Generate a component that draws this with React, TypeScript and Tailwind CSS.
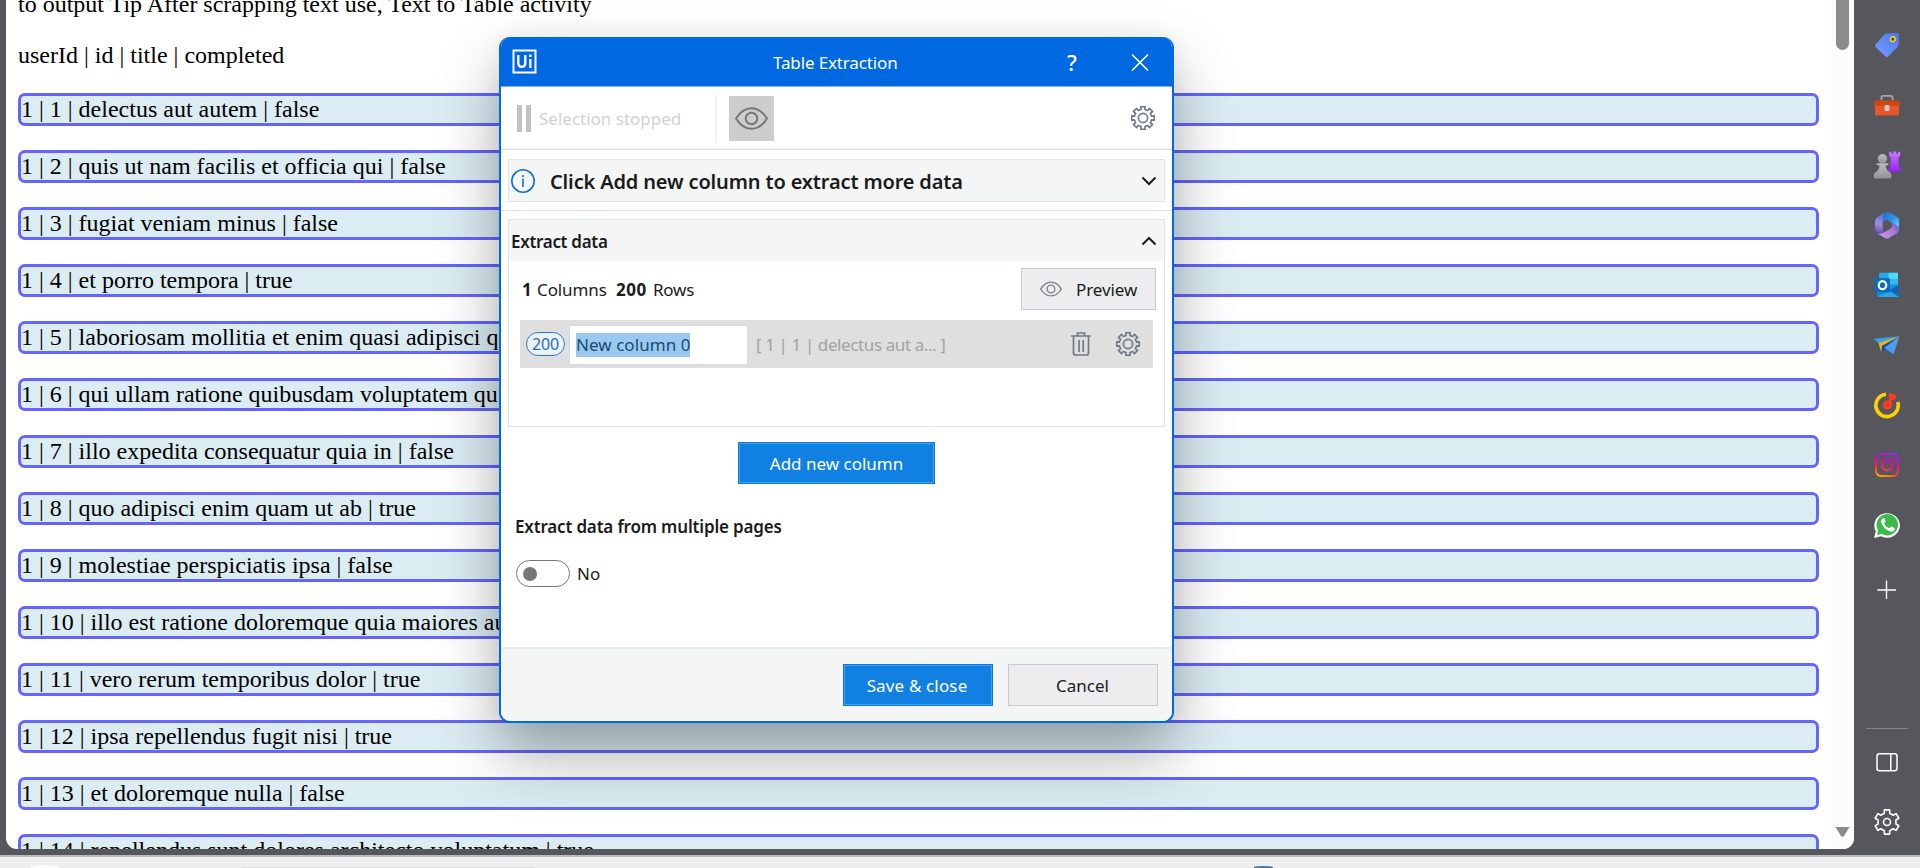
import type { ReactNode } from "react";

const rows = [
  "1 | 1 | delectus aut autem | false",
  "1 | 2 | quis ut nam facilis et officia qui | false",
  "1 | 3 | fugiat veniam minus | false",
  "1 | 4 | et porro tempora | true",
  "1 | 5 | laboriosam mollitia et enim quasi adipisci q",
  "1 | 6 | qui ullam ratione quibusdam voluptatem qu",
  "1 | 7 | illo expedita consequatur quia in | false",
  "1 | 8 | quo adipisci enim quam ut ab | true",
  "1 | 9 | molestiae perspiciatis ipsa | false",
  "1 | 10 | illo est ratione doloremque quia maiores au",
  "1 | 11 | vero rerum temporibus dolor | true",
  "1 | 12 | ipsa repellendus fugit nisi | true",
  "1 | 13 | et doloremque nulla | false",
  "1 | 14 | repellendus sunt dolores architecto voluptatum | true",
];

/* Closed outline of a cog; `w` and `t` are the half angles (degrees) of a tooth's foot and tip. */
function cogPath(teeth: number, c: number, outer: number, inner: number, w: number, t: number) {
  const pts: string[] = [];
  const at = (r: number, deg: number) => {
    const a = ((deg - 90) * Math.PI) / 180;
    pts.push(`${(c + r * Math.cos(a)).toFixed(2)} ${(c + r * Math.sin(a)).toFixed(2)}`);
  };
  for (let i = 0; i < teeth; i++) {
    const m = (360 / teeth) * i;
    at(inner, m - w);
    at(outer, m - t);
    at(outer, m + t);
    at(inner, m + w);
  }
  return `M${pts.join("L")}Z`;
}

const dialogCog = cogPath(8, 12, 11.5, 8.8, 13, 10.5);
const sidebarCog = cogPath(6, 14, 12.4, 9.2, 17, 12.5);

function Cog() {
  return (
    <svg className="size-6 shrink-0" viewBox="0 0 24 24" fill="none" stroke="#6f7c87" strokeWidth="1.7">
      <path d={dialogCog} />
      <circle cx="12" cy="12" r="4.6" />
    </svg>
  );
}

function Eye({ className, stroke, width }: { className: string; stroke: string; width: number }) {
  return (
    <svg className={className} viewBox="0 0 32 22" fill="none" stroke={stroke} strokeWidth={width}>
      <path d="M1 11C5 4.500 10 1 16 1s11 3.500 15 10c-4 6.500-9 10-15 10S5 17.500 1 11Z" />
      <circle cx="16" cy="11" r="5.600" />
    </svg>
  );
}

function Chevron({ up = false }: { up?: boolean }) {
  return (
    <svg className="h-[10px] w-4" viewBox="0 0 16 10" fill="none" stroke="#1b1b1b" strokeWidth="2">
      <path d={up ? "M1.500 8.500 8 2l6.500 6.500" : "M1.500 1.500 8 8l6.500-6.500"} />
    </svg>
  );
}

function Slot({ children }: { children: ReactNode }) {
  return <div className="flex h-[60px] w-full items-center justify-center">{children}</div>;
}

function Sidebar() {
  return (
    <aside className="flex w-[66px] shrink-0 flex-col items-center pt-[15px]">
      <Slot>
        <svg className="size-[26px]" viewBox="0 0 26 26">
          <defs>
            <linearGradient id="tag" x1="1" y1="0" x2="0" y2="1">
              <stop offset="0" stopColor="#4a78ee" />
              <stop offset="1" stopColor="#7b9cff" />
            </linearGradient>
          </defs>
          <path d="M12.500 1.500 23.500 1q1.500 0 1.500 1.500L24.500 13q0 1-1 2L14 24.500q-1.200 1-2.400 0L1.500 15q-1-1.200 0-2.400L10.500 2.500q.8-.9 2-1Z" fill="url(#tag)" />
          <circle cx="18.800" cy="7.200" r="2.300" fill="#3b4252" stroke="#f2cf1f" strokeWidth="1.700" />
        </svg>
      </Slot>
      <Slot>
        <svg className="size-[28px]" viewBox="0 0 28 28">
          <path d="M8.500 9V6.500Q8.500 4.800 10 4.800h8q1.500 0 1.500 1.700V9" fill="none" stroke="#a9a9a9" strokeWidth="1.800" />
          <path d="M2 13h24v10q0 1.500-1.500 1.500h-21Q2 24.500 2 23Z" fill="#e9562c" />
          <path d="M2 9.500h24q.8 0 .8.800l.5 4q0 .8-.8.800H1.500q-.8 0-.8-.800l.5-4Q1.200 9.500 2 9.500Z" fill="#d04512" />
          <rect x="11.600" y="14" width="4.800" height="6" rx="1.200" fill="#c9c9c9" />
        </svg>
      </Slot>
      <Slot>
        <svg className="size-[28px]" viewBox="0 0 28 28">
          <defs>
            <linearGradient id="rook" x1="0" y1="0" x2="0" y2="1">
              <stop offset="0" stopColor="#c77bff" />
              <stop offset="1" stopColor="#9a1dff" />
            </linearGradient>
            <linearGradient id="pawn" x1="0" y1="0" x2="0" y2="1">
              <stop offset="0" stopColor="#bdbdbd" />
              <stop offset="1" stopColor="#939393" />
            </linearGradient>
          </defs>
          <path d="M16 .8h2.200v1.800h2.100V.5h2.600v2.100H25V.8h2.200V5l-1.800 1.500.5 8.500 1.400 3v2.500H15.900V18l1.400-3 .5-8.500L16 5Z" fill="url(#rook)" />
          <circle cx="9.500" cy="7.800" r="4.700" fill="url(#pawn)" />
          <path d="M4.500 12.300h10q1 0 1 .9t-1 1h-1.800q.3 5.200 3.800 6.800 2 1.200 2 4 0 2.500-1.500 2.500H2.200Q.7 27.500.7 25q0-2.800 2-4 3.500-1.600 3.800-6.800h-2q-1-.1-1-1t1-.9Z" fill="url(#pawn)" />
        </svg>
      </Slot>
      <Slot>
        <svg className="size-[28px]" viewBox="0 0 28 28">
          <defs>
            <linearGradient id="m1" x1="0" y1="0" x2="1" y2="1">
              <stop offset="0" stopColor="#2b62c4" />
              <stop offset=".5" stopColor="#2f8ede" />
              <stop offset="1" stopColor="#5fe0ff" />
            </linearGradient>
            <linearGradient id="m2" x1=".3" y1="0" x2=".2" y2="1">
              <stop offset="0" stopColor="#5a6fd0" />
              <stop offset=".5" stopColor="#a58be0" />
              <stop offset="1" stopColor="#5348b8" />
            </linearGradient>
            <linearGradient id="m3" x1="0" y1=".6" x2="1" y2="0">
              <stop offset="0" stopColor="#cf95ea" />
              <stop offset=".6" stopColor="#a576d4" />
              <stop offset="1" stopColor="#6a4bc0" />
            </linearGradient>
          </defs>
          <path d="M11.500 1.800 4 6.200Q2 7.500 2 9.500V18q0 2.500 2 3.700l3 1.500q2 .5 2.800-1.200V11q0-4 1.700-9.200Z" fill="url(#m2)" />
          <path d="M13.500 1q1.500-.6 3 .2l7 4.300q2.500 1.300 2.500 3.500v8l-7.500-5.500-3.500-2q-2.500-1.200-4.200 1.200L9.800 11.800V6.500Q10 2.600 13.500 1Z" fill="url(#m1)" />
          <path d="M26 14v5q0 2-2 3.300l-8 4.700q-2 1-4 0L4.500 22.500q3.500.9 6.300-1l6.900-4q1.300-.8 1.300-2.300V11.500L26 16Z" fill="url(#m3)" />
          <path d="m14 9.800 4.600 2.500v3.500L14 18.400l-4.200-2.300v-4Z" fill="#56575c" />
        </svg>
      </Slot>
      <Slot>
        <svg className="size-[26px]" viewBox="0 0 26 26">
          <path d="M5 1.500Q5 .8 5.800.8h17.400q.8 0 .8.700V13H5Z" fill="#28a8ea" />
          <path d="M14.500.8H24V7h-9.500Z" fill="#50d9ff" />
          <path d="M14 7h10v6H14Z" fill="#35b8f1" />
          <path d="M3 12.500h22V24q0 1-1 1H4q-1 0-1-1Z" fill="#1490df" />
          <path d="m25 12.500-10 6L25 25Z" fill="#1066b5" />
          <path d="m4 25 11-6.500L25 25Z" fill="#28a8ea" />
          <rect x="1" y="6" width="15" height="14.500" rx="1.200" fill="#0a6cc8" />
          <ellipse cx="8.500" cy="13.200" rx="3.700" ry="4" fill="none" stroke="#fff" strokeWidth="2.300" />
        </svg>
      </Slot>
      <Slot>
        <svg className="size-[28px]" viewBox="0 0 28 28">
          <path d="M.8 7.700 26.500 5.200 7 13.500Z" fill="#35a2e8" />
          <path d="M26.500 5.200 5.500 12l2.700 9.500L11 16.500Z" fill="#f4b10a" />
          <path d="M26.500 5.200 9 14.800l-.8 6.700 4-3.500Z" fill="#1b4fa6" />
          <path d="M26.500 5.200 11.500 16.700 20.500 23.500Z" fill="#4a9df0" />
        </svg>
      </Slot>
      <Slot>
        <svg className="size-[28px]" viewBox="0 0 28 28">
          <path d="M13 3.200A11.200 11.200 0 1 0 24.700 11" fill="none" stroke="#fdd000" strokeWidth="3.600" />
          <circle cx="14.300" cy="14" r="4.500" fill="#ff3b1f" />
          <path d="M16 14V1.500l7.700 3.200-2.300 4.800-2.600-1.300V14Z" fill="#ff3b1f" />
        </svg>
      </Slot>
      <Slot>
        <svg className="size-[26px]" viewBox="0 0 26 26" fill="none" stroke="url(#ig)">
          <defs>
            <linearGradient id="ig" gradientUnits="userSpaceOnUse" x1="6" y1="26" x2="13" y2="0">
              <stop offset="0" stopColor="#ffc20a" />
              <stop offset=".25" stopColor="#ff4a1c" />
              <stop offset=".5" stopColor="#ff0a86" />
              <stop offset=".75" stopColor="#d800c8" />
              <stop offset="1" stopColor="#8a2cff" />
            </linearGradient>
          </defs>
          <rect x="2" y="2" width="22" height="22" rx="5" strokeWidth="2.100" />
          <circle cx="13" cy="13" r="5.200" strokeWidth="2.100" />
          <circle cx="19.300" cy="6.700" r=".7" strokeWidth="1.400" />
        </svg>
      </Slot>
      <Slot>
        <svg className="size-[28px]" viewBox="0 0 28 28">
          <path d="M1 27 2.800 20.300A12.800 12.300 0 1 1 8 25.300Z" fill="#fff" />
          <circle cx="14.300" cy="13.700" r="10.700" fill="#3cba4b" />
          <path d="M4 24.200 5.300 18l4 4.500Z" fill="#3cba4b" />
          <path d="M9.800 7.300c-1.800 1-2 3.200-1.200 5.200 1.700 4 5.400 7.400 9.400 8 2 .2 3.600-.8 3.800-2.800.1-.7-2.900-2.400-3.700-2.300-.8.200-1.300 1.800-1.900 1.700-2.100-.6-4.200-2.600-5-4.700-.1-.6 1.300-1.200 1.300-2 0-.8-1-3-1.500-3.200-.4-.1-.9-.1-1.200.1Z" fill="#fff" />
        </svg>
      </Slot>
      <div className="flex h-[70px] items-center">
        <svg className="size-5" viewBox="0 0 20 20" stroke="#fff" strokeWidth="1.400">
          <path d="M9.500.5v18.500M.3 10H19" />
        </svg>
      </div>
      <div className="mt-[102.500px] h-px w-[42px] bg-[#85868a]" />
      <div className="flex h-[66px] items-center">
        <svg className="size-6" viewBox="0 0 24 24" fill="none" stroke="#fff" strokeWidth="1.500">
          <rect x="2" y="3.700" width="20" height="17" rx="2.500" />
          <path d="M15.800 3.700v17" />
        </svg>
      </div>
      <div className="flex h-[54px] items-center">
        <svg className="size-7" viewBox="0 0 28 28" fill="none" stroke="#fff" strokeWidth="1.600" strokeLinejoin="round">
          <path d={sidebarCog} />
          <circle cx="14" cy="14" r="3.500" />
        </svg>
      </div>
    </aside>
  );
}

function Page() {
  return (
    <main className="flex h-[849px] w-[1848px] shrink-0 overflow-hidden rounded-br-[11px] rounded-bl-[11px] bg-white">
      <div className="-mt-[9px] flex h-[900px] w-[1825px] shrink-0 flex-col gap-6 pr-3 pl-3 font-['Liberation_Serif',serif] text-[24px] leading-[27px] whitespace-nowrap text-black">
        <p>to output Tip After scrapping text use, Text to Table activity</p>
        <p>userId | id | title | completed</p>
        {rows.map((row) => (
          <p key={row} className="shrink-0 rounded-[7px] border-[3px] border-[#6464ff] bg-[#dbecf3]">
            {row}
          </p>
        ))}
      </div>
      <div className="flex w-[23px] flex-col items-center justify-between bg-[#fcfcfc]">
        <div className="h-[50px] w-[13px] rounded-b-full bg-[#8b8b8b]" />
        <svg className="mb-3 h-[10px] w-[15px]" viewBox="0 0 15 10">
          <path d="M.5 0h14L9 9q-1.500 1.500-3 0Z" fill="#8b8b8b" />
        </svg>
      </div>
    </main>
  );
}

function Dialog() {
  return (
    <section className="absolute top-[37px] left-[499px] flex h-[686px] w-[675px] flex-col overflow-hidden rounded-[11px] border-2 border-t-0 border-[#0068e0] bg-white font-['Noto_Sans',sans-serif] text-[17px] leading-6 whitespace-nowrap text-[#1b1b1b] shadow-[0_32px_64px_rgba(0,0,0,0.32),0_0_24px_rgba(0,0,0,0.06)]">
      <header className="flex h-[50px] shrink-0 items-center border-b border-[#7db3f2] bg-[#0068e0] text-white">
        <svg className="ml-[11px] size-[25px]" viewBox="0 0 25 25" fill="none" stroke="#fff">
          <rect x="1.500" y="1.500" width="22" height="22" strokeWidth="2" />
          <path d="M6.300 6v8.200q0 3.600 3.500 3.600t3.500-3.600V6M18.300 10v9" strokeWidth="2.300" />
          <path d="M18.300 5.500v2.600" strokeWidth="2.500" />
        </svg>
        <h1 className="ml-[236px] w-[130px] pt-[2px] tracking-[-0.14px]">Table Extraction</h1>
        <span className="ml-[164px] text-[22px] font-medium">?</span>
        <svg className="ml-[54px] size-[18px]" viewBox="0 0 18 18" stroke="#fff" strokeWidth="1.600">
          <path d="m1 1.500 16 16M17 1.500 1 17.500" />
        </svg>
      </header>

      <div className="flex h-[63px] shrink-0 items-center border-b border-[#dedede] shadow-[0_-1px_0_#f2f2f2_inset]">
        <div className="ml-[16px] flex gap-[4px]">
          <span className="h-[27px] w-[5px] bg-[#c3c3c3]" />
          <span className="h-[27px] w-[5px] bg-[#c3c3c3]" />
        </div>
        <span className="ml-2 w-[176px] pt-px text-[#d2d2d2]">Selection stopped</span>
        <span className="h-12 w-0.5 bg-[#f3f3f3]" />
        <span className="ml-3 flex size-[45px] items-center justify-center bg-[#cdcdcd]">
          <Eye className="h-[23px] w-[33px]" stroke="#77777b" width={2} />
        </span>
        <span className="ml-auto mr-[17px]">
          <Cog />
        </span>
      </div>

      <div className="h-[61px] shrink-0 border-b border-[#dedede] px-[7px] pt-[9px]">
        <div className="flex h-[43px] items-center border border-[#e2e3e3] bg-[#f4f6f6] pr-[7px] pl-[2px]">
          <svg className="size-6" viewBox="0 0 24 24" fill="none" stroke="#0f6fde" strokeWidth="1.600">
            <circle cx="12" cy="12" r="11.200" />
            <path d="M12 9.500V18M12 6v2" />
          </svg>
          <h2 className="ml-[15px] flex-1 pt-[2px] text-[20px] font-semibold tracking-[-0.15px]">
            Click Add new column to extract more data
          </h2>
          <Chevron />
        </div>
      </div>

      <div className="mx-[7px] mt-2 flex h-[208px] shrink-0 flex-col border border-[#e2e3e3]">
        <div className="flex h-[41px] items-center justify-between bg-[#f4f6f6] pr-[7px] pl-[2px]">
          <h3 className="pt-[2px] font-semibold tracking-[-0.3px]">Extract data</h3>
          <Chevron up />
        </div>
        <div className="mt-[7px] flex items-center pr-2 pl-[13px]">
          <b className="w-[15px] pt-[2px]">1</b>
          <span className="w-[79px] pt-[2px] tracking-[-0.1px]">Columns</span>
          <b className="w-[37px] pt-[2px] tracking-[0.5px]">200</b>
          <span className="pt-[2px] tracking-[-0.2px]">Rows</span>
          <span className="ml-auto flex h-[42px] w-[135px] items-center border border-[#c9cacb] bg-[#ededef] pl-[18px]">
            <Eye className="h-4 w-[22px]" stroke="#7d7f84" width={2} />
            <span className="ml-3.5 pt-[2px] tracking-[-0.1px]">Preview</span>
          </span>
        </div>
        <div className="mt-[10px] mr-[11px] ml-[11px] flex h-12 items-center bg-[#dfdfdf] pr-[13px] pl-[6px]">
          <span className="flex h-6 w-[39px] items-center justify-center rounded-full border-[1.500px] border-[#2a78cf] bg-[#eaf2fb] text-[16px] tracking-[-0.2px] text-[#2f6cab]">
            200
          </span>
          <span className="mt-px ml-1 flex h-[40px] w-[179px] items-center border border-[#d6dade] bg-white pl-[6px]">
            <span className="flex h-6 items-center bg-[#99c9ef] pt-px tracking-[0.050px] text-[#1c4a73]">New column 0</span>
          </span>
          <span className="ml-[8px] flex-1 pt-[2px] tracking-[-0.4px] text-[#a2a2a2]">[ 1 | 1 | delectus aut a... ]</span>
          <svg className="mr-[25px] h-6 w-5" viewBox="0 0 20 24" fill="none" stroke="#6f7c87" strokeWidth="1.700">
            <path d="M0 4h20M6.500 4V1h7v3M2.500 4v17q0 2 2 2h11q2 0 2-2V4M8 8v12M12.200 8v12" />
          </svg>
          <Cog />
        </div>
      </div>

      <div className="flex flex-1 flex-col">
        <button className="mt-[15px] ml-[237px] h-[42px] w-[197px] border border-[#0d78dc] bg-[#1080e2] pt-px text-white shadow-[0_0_0_1px_#4a9ee9_inset]">
          Add new column
        </button>
        <h3 className="mt-[31px] ml-[14px] font-semibold tracking-[-0.17px]">Extract data from multiple pages</h3>
        <div className="mt-[21px] ml-[15px] flex items-center">
          <span className="flex h-[27px] w-[54px] items-center rounded-full border-[1.500px] border-[#77777b] pl-[6px]">
            <span className="size-[14px] rounded-full bg-[#77777b]" />
          </span>
          <span className="ml-[7px] pt-px">No</span>
        </div>
      </div>

      <footer className="flex h-[74px] shrink-0 items-start justify-end gap-[15px] border-t-2 border-[#e9eaea] bg-[#f4f6f6] pt-[15px] pr-[14px]">
        <button className="h-[42px] w-[150px] border border-[#0d78dc] bg-[#1080e2] pt-px pr-[2px] tracking-[0.15px] text-white shadow-[0_0_0_1px_#4a9ee9_inset]">
          Save &amp; close
        </button>
        <button className="h-[42px] w-[150px] border border-[#c9cacb] bg-[#ededef] pt-px pr-px">Cancel</button>
      </footer>
    </section>
  );
}

export default function App() {
  return (
    <div className="relative flex h-[868px] w-[1920px] flex-col overflow-hidden bg-[#56575c]">
      <div className="flex h-[855px] shrink-0 pl-1.5">
        <Page />
        <Sidebar />
      </div>
      <div className="flex h-[13px] shrink-0 items-end overflow-hidden border-t-2 border-[#bbbabf] bg-[#eeeeee]">
        <div className="ml-[31px] h-[3px] w-[28px] rounded-t-[50%] bg-[#fafafa]" />
        <div className="ml-[184px] h-px w-[292px] bg-[#dcdcdc]" />
        <div className="ml-[719px] h-[2px] w-[19px] rounded-t-[50%] bg-[#3f7ba8]" />
      </div>
      <Dialog />
    </div>
  );
}
